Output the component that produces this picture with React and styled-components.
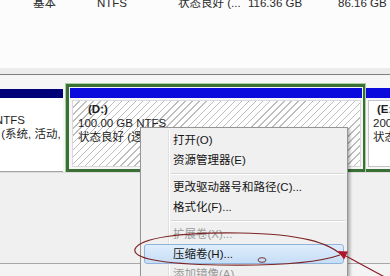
import React from 'react';
import styled, { createGlobalStyle } from 'styled-components';

const GlobalStyle = createGlobalStyle`
  body {
    margin: 0;
    overflow: hidden;
    font-family: "Liberation Sans", "Noto Sans CJK SC", sans-serif;
  }
`

const Page = styled.div`
  position: relative;
  width: 390px;
  height: 276px;
  overflow: hidden;
  background: #fbfbfb;
  display: flex;
  flex-direction: column;
  color: #1e1e1e;
  font-size: 11.5px;
`

const ListArea = styled.div`
  height: 68px;
  overflow: hidden;
  background: #fcfcfc;
`

const ListRow = styled.div`
  display: grid;
  grid-template-columns: 64px 81px 70px 90px auto;
  padding-left: 33px;
  margin-top: -4px;
  line-height: 14px;
  white-space: nowrap;
  color: #2a2a2a;
`

const Splitter = styled.div`
  height: 6px;
  background: #ececec;
  border-bottom: 1px solid #808080;
`

const DiskArea = styled.div`
  height: 97px;
  box-sizing: border-box;
  padding-top: 9px;
  background: #f6f6f6;
  display: flex;
  align-items: stretch;
  overflow: hidden;
`

const Cell = styled.div`
  display: flex;
  flex-direction: column;
  flex: none;
  box-sizing: border-box;
`

const LeftCell = styled(Cell)`
  width: 111px;
  margin-left: -48px;
  padding-top: 5px;
`

const DCell = styled(Cell)`
  width: 299px;
  margin-left: 3px;
  border: 3px solid #3a6f35;
  border-right-width: 2px;
  box-shadow: 0 0 0 1px #a9cfa5;
  padding: 1px 1px 0 1px;
`

const ECell = styled(Cell)`
  width: 40px;
  margin-left: 1px;
  padding-top: 4px;
  border-bottom: 3px solid #3a6f35;
`

const Bar = styled.div`
  height: ${p => p.$h || 10}px;
  flex: none;
  background: ${p => p.$dark ? '#000078' : '#0b0bde'};
`

const Body = styled.div`
  flex: 1;
  background: #fff;
  line-height: 14px;
  white-space: nowrap;
  overflow: hidden;
  padding-top: 1px;
`

const LeftBody = styled(Body)`
  border-bottom: 1px solid #a3a3a3;
`

const HatchBody = styled(Body)`
  margin: 2px 1px 2px 2px;
  padding-left: 5px;
  border: 1px solid #dadada;
  background: repeating-linear-gradient(135deg, #fff 0 4px, #bdbdbd 4px 5px);
`

const EBody = styled(Body)`
  margin: 2px 0 2px 2px;
  padding-left: 4px;
  border: 1px solid #c4c4c4;
`

const Name = styled.div`
  font-weight: bold;
  padding-left: ${p => p.$indent || 0}px;
`

const Lower = styled.div`
  height: 92px;
  flex: none;
  background: #f0f0f0;
  border-top: 1px solid #dcdcdc;
  border-bottom: 1px solid #a8a8a8;
  box-sizing: border-box;
`

const Footer = styled.div`
  flex: 1;
  background: #f4f4f4;
`

const Menu = styled.div`
  position: absolute;
  left: 140px;
  top: 127px;
  width: 208px;
  box-sizing: border-box;
  padding: 2px;
  background: #f0f0f0;
  border: 1px solid #959595;
  box-shadow: 2px 2px 3px rgba(0, 0, 0, 0.3);
  font-size: 11.5px;

  &::before {
    content: "";
    position: absolute;
    left: 27px;
    top: 2px;
    bottom: 0;
    width: 1px;
    background: #e0e0e0;
    border-right: 1px solid #fff;
  }
`

const Item = styled.div`
  position: relative;
  height: 20px;
  line-height: 18px;
  margin: 0 1px;
  padding-left: 28px;
  border: 1px solid ${p => p.$active ? '#90b4dc' : 'transparent'};
  border-radius: 3px;
  box-sizing: border-box;
  white-space: nowrap;
  color: ${p => p.$disabled ? '#9a9a9a' : '#141414'};
  background: ${p => p.$active ? 'linear-gradient(#dfedfc, #c6ddf6)' : 'transparent'};
`

const Separator = styled.div`
  position: relative;
  height: 7px;
  margin-left: 28px;

  &::after {
    content: "";
    position: absolute;
    left: 0;
    right: 0;
    top: 3px;
    height: 1px;
    background: #d7d7d7;
    border-bottom: 1px solid #fff;
  }
`

const Annotation = styled.svg`
  position: absolute;
  left: 0;
  top: 0;
  pointer-events: none;
`

const columns = ['基本', 'NTFS', '状态良好 (...', '116.36 GB', '86.16 GB'];

const menuItems = [
  { label: '打开(O)' },
  { label: '资源管理器(E)' },
  { sep: true },
  { label: '更改驱动器号和路径(C)...' },
  { label: '格式化(F)...' },
  { sep: true },
  { label: '扩展卷(X)...', disabled: true },
  { label: '压缩卷(H)...', active: true },
  { label: '添加镜像(A)...', disabled: true },
];

const App = () => {
  return (
    <Page>
      <GlobalStyle />
      <ListArea>
        <ListRow>
          {columns.map((c, i) => <span key={i}>{c}</span>)}
        </ListRow>
      </ListArea>
      <Splitter />
      <DiskArea>
        <LeftCell>
          <Bar $dark $h={9} />
          <LeftBody>
            <Name>&nbsp;</Name>
            <div>100 MB NTFS</div>
            <div>状态良好 (系统, 活动, 主分区)</div>
          </LeftBody>
        </LeftCell>
        <DCell>
          <Bar />
          <HatchBody>
            <Name $indent={10}>(D:)</Name>
            <div>100.00 GB NTFS</div>
            <div>状态良好 (逻辑驱动器)</div>
          </HatchBody>
        </DCell>
        <ECell>
          <Bar />
          <EBody>
            <Name $indent={4}>(E:)</Name>
            <div>200.00 GB NTFS</div>
            <div>状态良好 (逻辑驱动器)</div>
          </EBody>
        </ECell>
      </DiskArea>
      <Lower />
      <Footer />

      <Menu>
        {menuItems.map((m, i) => m.sep
          ? <Separator key={i} />
          : <Item key={i} $disabled={m.disabled} $active={m.active}>{m.label}</Item>
        )}
      </Menu>

      <Annotation width="390" height="276" viewBox="0 0 390 276">
        <path
          d="M345 258 C330 242, 300 234, 240 233 C180 232, 140 238, 135 249 C132 258, 160 264, 220 265 C280 266, 320 262, 340 255"
          fill="none" stroke="#7e2424" strokeWidth="1.2" />
        <ellipse cx="262" cy="260" rx="4" ry="2.3" fill="none" stroke="#6e3a3a" strokeWidth="1" />
        <line x1="392" y1="281" x2="344" y2="255" stroke="#8e1f28" strokeWidth="1.2" />
        <polygon points="338,251 348,251.5 344,259.5" fill="#b0162a" />
      </Annotation>
    </Page>
  );
}

export default App;
